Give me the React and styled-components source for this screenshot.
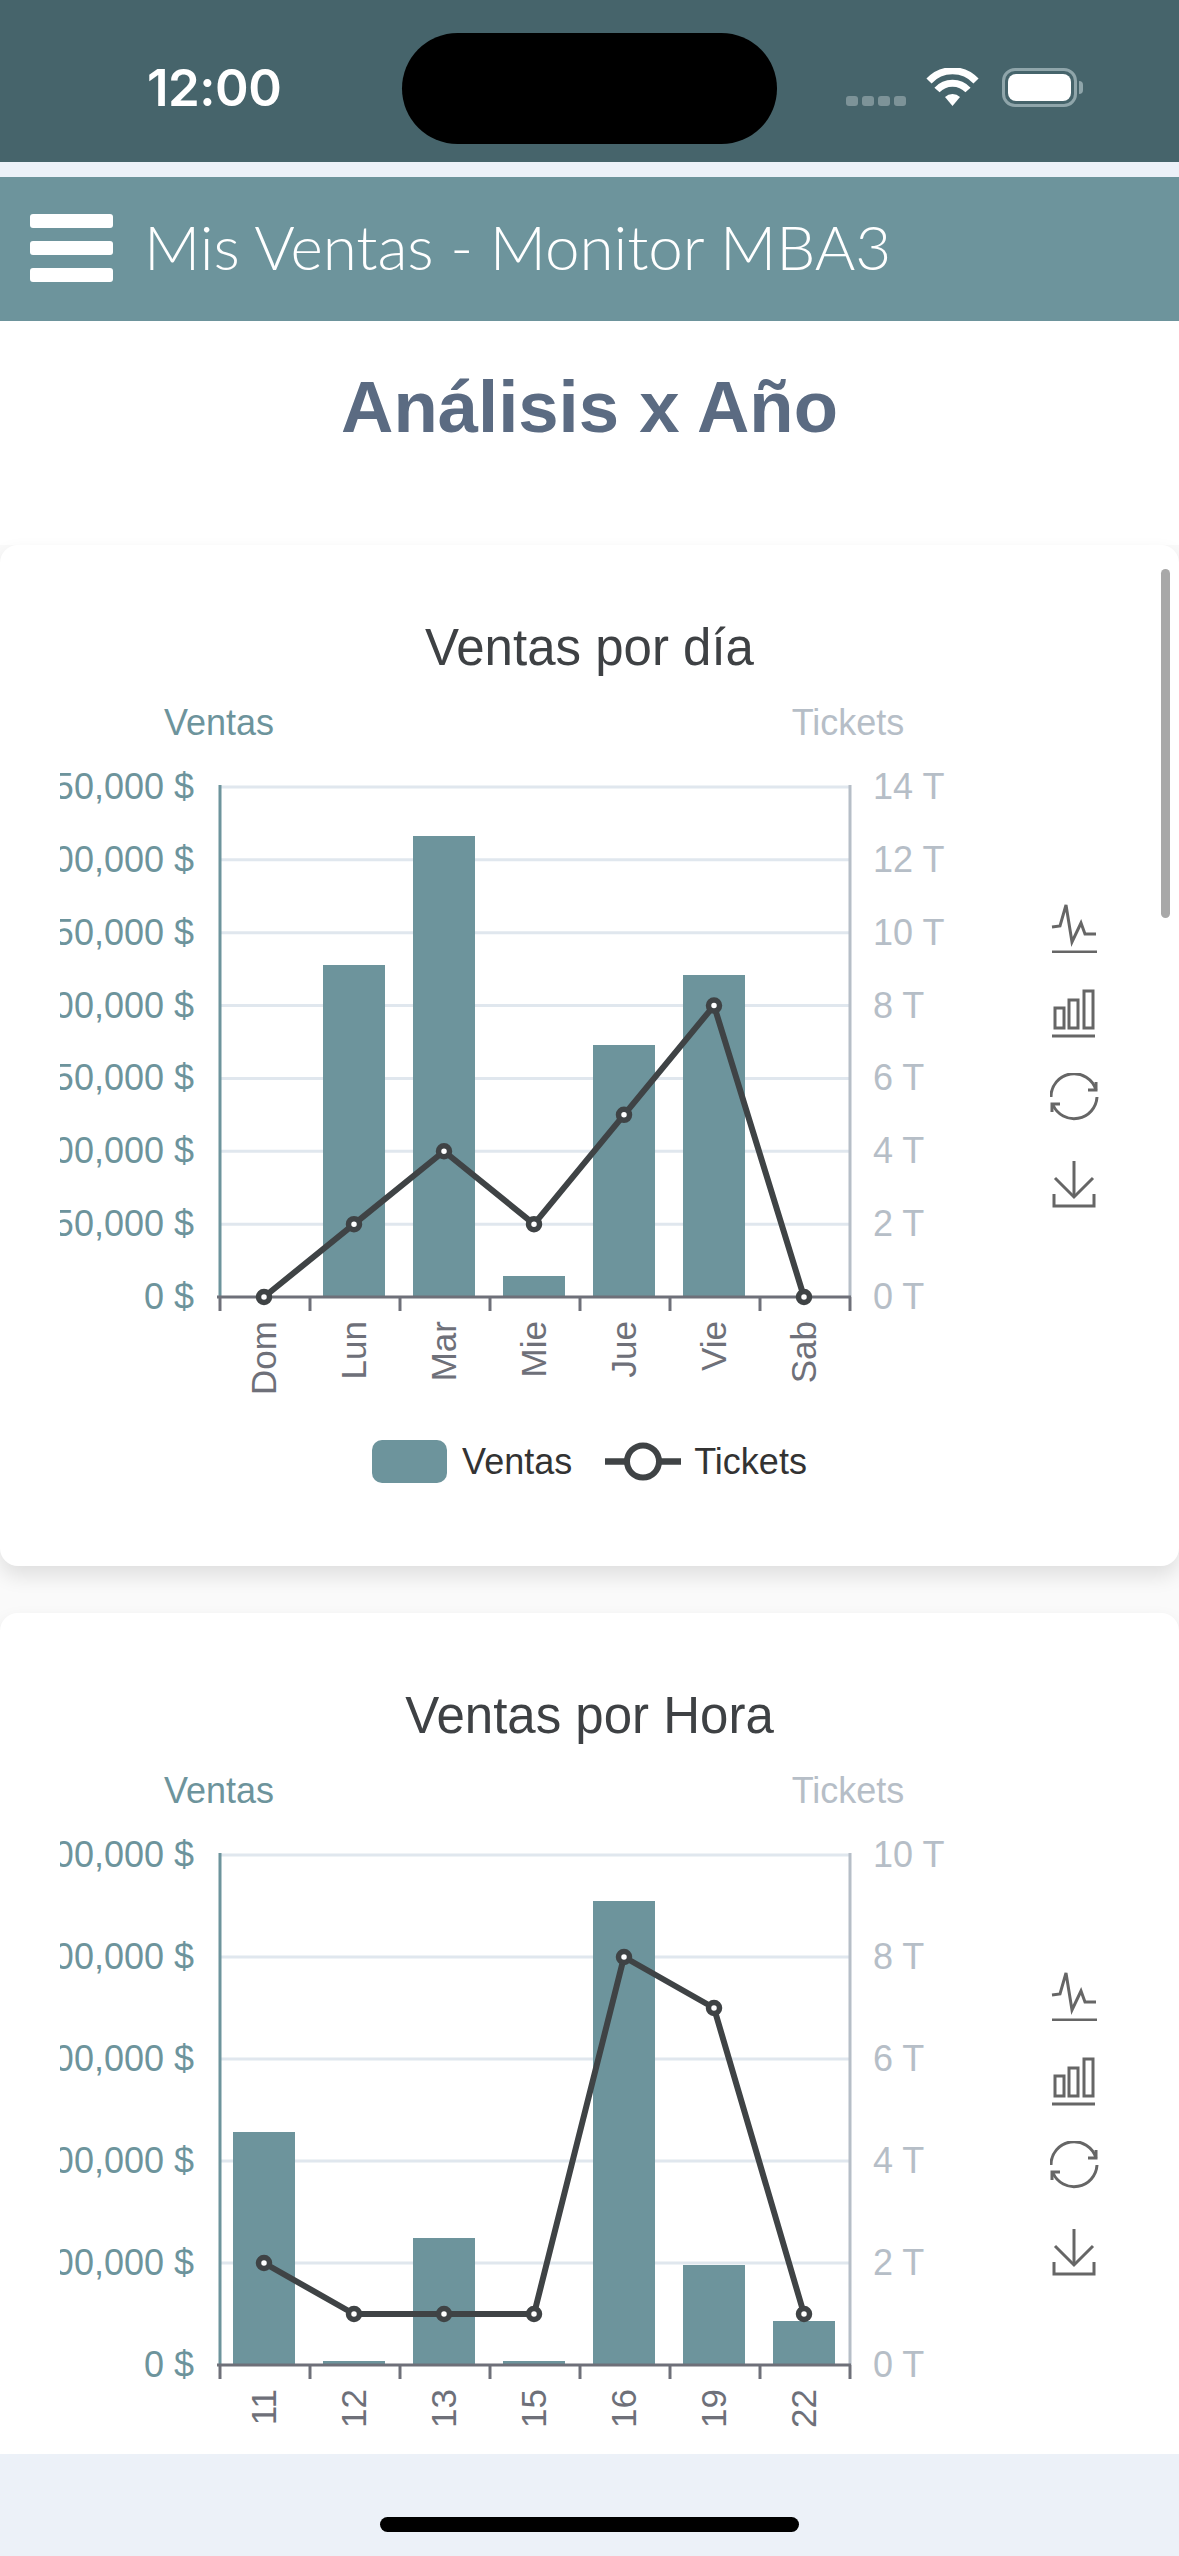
import React from 'react'
import styled, { createGlobalStyle } from 'styled-components'

const GlobalStyle = createGlobalStyle`
  html, body {
    margin: 0;
    padding: 0;
    background: #ecf1f8;
  }
  * {
    box-sizing: border-box;
  }
`

const Page = styled.div`
  width: 1179px;
  height: 2556px;
  display: flex;
  flex-direction: column;
  overflow: hidden;
  background: #ecf1f8;
  font-family: "Liberation Sans", Arial, sans-serif;
`

const StatusBar = styled.div`
  height: 162px;
  flex: none;
  display: flex;
  background: #46646b;
`

const Time = styled.div`
  width: 402px;
  padding: 61px 0 0 147px;
  font-family: Inter, sans-serif;
  font-size: 51px;
  line-height: 54px;
  font-weight: 600;
  letter-spacing: -0.5px;
  color: #fff;
`

const Island = styled.div`
  width: 375px;
  height: 111px;
  margin-top: 33px;
  border-radius: 56px;
  background: #000;
`

const StatusIcons = styled.div`
  display: flex;
  align-items: flex-start;
  padding: 68px 0 0 69px;
`

const Signal = styled.div`
  display: flex;
  gap: 4px;
  margin: 28px 20px 0 0;
`

const SignalDot = styled.span`
  width: 12px;
  height: 10px;
  border-radius: 3px;
  background: #7d9398;
`

const Wifi = styled.svg`
  display: block;
  margin-right: 23px;
`

const Battery = styled.div`
  position: relative;
  width: 75px;
  height: 39px;
  padding: 3px;
  border: 3px solid #8fa5aa;
  border-radius: 13px;

  &::after {
    content: '';
    position: absolute;
    right: -9px;
    top: 10px;
    width: 4px;
    height: 13px;
    border-radius: 0 4px 4px 0;
    background: #8fa5aa;
  }
`

const BatteryLevel = styled.div`
  height: 100%;
  border-radius: 8px;
  background: #fff;
`

const Spacer = styled.div`
  height: 15px;
  flex: none;
`

const Header = styled.header`
  height: 144px;
  flex: none;
  display: flex;
  align-items: center;
  gap: 31px;
  padding: 0 0 6px 30px;
  background: #6d949c;
`

const Burger = styled.div`
  width: 83px;
  display: flex;
  flex-direction: column;
  gap: 13px;
  padding-top: 3px;
`

const BurgerBar = styled.span`
  height: 14px;
  border-radius: 3px;
  background: #fff;
`

const HeaderTitle = styled.div`
  font-family: Lato, sans-serif;
  font-size: 62px;
  line-height: 72px;
  font-weight: 300;
  letter-spacing: -0.1px;
  color: #fff;
  white-space: nowrap;
`

const Main = styled.main`
  flex: none;
  height: 2133px;
  overflow: hidden;
  background: #fff;
`

const PageTitle = styled.h1`
  margin: 0;
  height: 224px;
  padding-top: 45px;
  font-size: 72.5px;
  line-height: 82px;
  font-weight: 700;
  text-align: center;
  color: #5b6b82;
`

const CardList = styled.div`
  display: flex;
  flex-direction: column;
  gap: 47px;
  background: #fafafa;
`

const Card = styled.section`
  position: relative;
  flex: none;
  height: ${p => p.$height}px;
  padding-top: 71px;
  border-radius: 18px;
  background: #fff;
  box-shadow: 0 10px 20px rgba(0, 0, 0, 0.11);
`

const Scrollbar = styled.div`
  position: absolute;
  top: 24px;
  right: 9px;
  width: 9px;
  height: 349px;
  border-radius: 5px;
  background: #a8a8a8;
`

const CardTitle = styled.h2`
  margin: 0 0 10px;
  font-size: 51px;
  line-height: 64px;
  font-weight: 400;
  text-align: center;
  color: #3e4144;
`

const ChartRow = styled.div`
  display: flex;
  align-items: flex-start;
  padding-left: 60px;
`

const ChartSvg = styled.svg`
  display: block;
  flex: none;
  font-family: "Liberation Sans", Arial, sans-serif;
`

const Toolbox = styled.div`
  display: flex;
  flex-direction: column;
  gap: 35px;
  margin: 213px 0 0 105px;
`

const ToolIcon = styled.svg`
  display: block;
  fill: none;
  stroke: #666;
  stroke-width: 3;
`

const Legend = styled.div`
  display: flex;
  justify-content: center;
  align-items: center;
  height: 43px;
  margin-top: 30px;
`

const LegendSwatch = styled.span`
  width: 75px;
  height: 43px;
  margin-right: 15px;
  border-radius: 10px;
  background: #6d949c;
`

const LegendLine = styled.svg`
  display: block;
  margin: 0 13px 0 33px;
`

const LegendLabel = styled.span`
  font-size: 36px;
  color: #333;
`

const BottomBar = styled.div`
  flex: 1;
  display: flex;
  justify-content: center;
  padding-top: 63px;
`

const HomeIndicator = styled.div`
  width: 419px;
  height: 15px;
  border-radius: 8px;
  background: #000;
`

const PLOT = { left: 160, right: 790, top: 97, bottom: 607 }
const STEP = (PLOT.right - PLOT.left) / 7

const Chart = ({ labels, bars, tickets, salesTicks, ticketTicks, ticketMax }) => {
  const rows = salesTicks.length - 1
  const rowY = i => PLOT.top + ((PLOT.bottom - PLOT.top) * i) / rows
  const center = i => PLOT.left + STEP * (i + 0.5) - 1
  const lineY = v => PLOT.bottom - ((PLOT.bottom - PLOT.top) * v) / ticketMax
  const points = tickets.map((v, i) => `${center(i)},${lineY(v)}`).join(' ')

  return (
    <ChartSvg width="885" height="720" viewBox="0 0 885 720">
      <text x="159" y="45" fontSize="36" textAnchor="middle" fill="#6d949c">Ventas</text>
      <text x="788" y="45" fontSize="36" textAnchor="middle" fill="#b6bec7">Tickets</text>

      {salesTicks.map((_, i) => i < rows && (
        <line key={i} x1={PLOT.left} x2={PLOT.right} y1={rowY(i)} y2={rowY(i)} stroke="#e0e7ee" strokeWidth="3" />
      ))}

      {bars.map((top, i) => (
        <rect key={i} x={center(i) - 31} y={top} width="62" height={PLOT.bottom - top} fill="#6d949c" />
      ))}

      <line x1={PLOT.left} x2={PLOT.left} y1={PLOT.top - 2} y2={PLOT.bottom} stroke="#6d949c" strokeWidth="3" />
      <line x1={PLOT.right} x2={PLOT.right} y1={PLOT.top - 2} y2={PLOT.bottom} stroke="#b6bec7" strokeWidth="3" />
      <line x1={PLOT.left - 3} x2={PLOT.right + 1} y1={PLOT.bottom} y2={PLOT.bottom} stroke="#6e7079" strokeWidth="3" />
      {[...labels, ''].map((_, i) => (
        <line
          key={i}
          x1={PLOT.left + STEP * i}
          x2={PLOT.left + STEP * i}
          y1={PLOT.bottom}
          y2={PLOT.bottom + 14}
          stroke="#6e7079"
          strokeWidth="3"
        />
      ))}

      {salesTicks.map((t, i) => (
        <text key={t} x="134" y={rowY(i) + 12} fontSize="36" textAnchor="end" fill="#6d949c">{t}</text>
      ))}
      {ticketTicks.map((t, i) => (
        <text key={t} x="813" y={rowY(i) + 12} fontSize="36" fill="#b6bec7">{t}</text>
      ))}

      {labels.map((label, i) => (
        <text
          key={label}
          fontSize="35"
          textAnchor="end"
          fill="#6e7079"
          transform={`translate(${center(i) + 12} ${PLOT.bottom + 24}) rotate(-90)`}
        >
          {label}
        </text>
      ))}

      <polyline points={points} fill="none" stroke="#3f4345" strokeWidth="6" strokeLinejoin="round" />
      {tickets.map((v, i) => (
        <circle key={i} cx={center(i)} cy={lineY(v)} r="5.5" fill="#fff" stroke="#3f4345" strokeWidth="5.5" />
      ))}
    </ChartSvg>
  )
}

const Tools = () => (
  <Toolbox>
    <ToolIcon width="50" height="50" viewBox="0 0 50 50">
      <path d="M2 24 L10 23 L16 2 L22 39 L31 20 L35 31 L46 31" />
      <path d="M2 49 H47" />
    </ToolIcon>
    <ToolIcon width="50" height="50" viewBox="0 0 50 50">
      <rect x="5" y="20" width="9" height="20" />
      <rect x="19" y="12" width="9" height="28" />
      <rect x="34" y="3" width="9" height="37" />
      <path d="M2 48 H45" />
    </ToolIcon>
    <ToolIcon width="50" height="50" viewBox="0 0 50 50">
      <path d="M1 24 A23 23 0 0 1 46 17" />
      <path d="M38 17 H46 V9" />
      <path d="M47 24 A23 23 0 0 1 3 32" />
      <path d="M10 31 H2 V39" />
    </ToolIcon>
    <ToolIcon width="50" height="50" viewBox="0 0 50 50">
      <path d="M24 3 V39" />
      <path d="M5 20 L24 39 L43 20" />
      <path d="M4 36 V48 H44 V36" />
    </ToolIcon>
  </Toolbox>
)

const dayChart = {
  labels: ['Dom', 'Lun', 'Mar', 'Mie', 'Jue', 'Vie', 'Sab'],
  bars: [607, 275, 146, 586, 355, 285, 607],
  tickets: [0, 2, 4, 2, 5, 8, 0],
  salesTicks: ['350,000 $', '300,000 $', '250,000 $', '200,000 $', '150,000 $', '100,000 $', '50,000 $', '0 $'],
  ticketTicks: ['14 T', '12 T', '10 T', '8 T', '6 T', '4 T', '2 T', '0 T'],
  ticketMax: 14,
}

const hourChart = {
  labels: ['11', '12', '13', '15', '16', '19', '22'],
  bars: [374, 603, 480, 603, 143, 507, 563],
  tickets: [2, 1, 1, 1, 8, 7, 1],
  salesTicks: ['500,000 $', '400,000 $', '300,000 $', '200,000 $', '100,000 $', '0 $'],
  ticketTicks: ['10 T', '8 T', '6 T', '4 T', '2 T', '0 T'],
  ticketMax: 10,
}

const App = () => (
  <Page>
    <GlobalStyle />
    <StatusBar>
      <Time>12:00</Time>
      <Island />
      <StatusIcons>
        <Signal>
          <SignalDot />
          <SignalDot />
          <SignalDot />
          <SignalDot />
        </Signal>
        <Wifi width="53" height="38" viewBox="0 0 53 38" fill="none" stroke="#fff">
          <path d="M3 13 A32 32 0 0 1 50 13" strokeWidth="7" />
          <path d="M11 22 A21 21 0 0 1 42 22" strokeWidth="7" />
          <path d="M19 29 L26.5 38 L34 29 A11 11 0 0 0 19 29 Z" fill="#fff" stroke="none" />
        </Wifi>
        <Battery>
          <BatteryLevel />
        </Battery>
      </StatusIcons>
    </StatusBar>
    <Spacer />
    <Header>
      <Burger>
        <BurgerBar />
        <BurgerBar />
        <BurgerBar />
      </Burger>
      <HeaderTitle>Mis Ventas - Monitor MBA3</HeaderTitle>
    </Header>
    <Main>
      <PageTitle>Análisis x Año</PageTitle>
      <CardList>
        <Card $height={1021}>
          <Scrollbar />
          <CardTitle>Ventas por día</CardTitle>
          <ChartRow>
            <Chart {...dayChart} />
            <Tools />
          </ChartRow>
          <Legend>
            <LegendSwatch />
            <LegendLabel>Ventas</LegendLabel>
            <LegendLine width="76" height="43" viewBox="0 0 76 43">
              <path d="M0 21.5 H76" stroke="#3f4345" strokeWidth="6.5" />
              <circle cx="38" cy="21.5" r="16" fill="#fff" stroke="#3f4345" strokeWidth="6" />
            </LegendLine>
            <LegendLabel>Tickets</LegendLabel>
          </Legend>
        </Card>
        <Card $height={1021}>
          <CardTitle>Ventas por Hora</CardTitle>
          <ChartRow>
            <Chart {...hourChart} />
            <Tools />
          </ChartRow>
        </Card>
      </CardList>
    </Main>
    <BottomBar>
      <HomeIndicator />
    </BottomBar>
  </Page>
)

export default App
